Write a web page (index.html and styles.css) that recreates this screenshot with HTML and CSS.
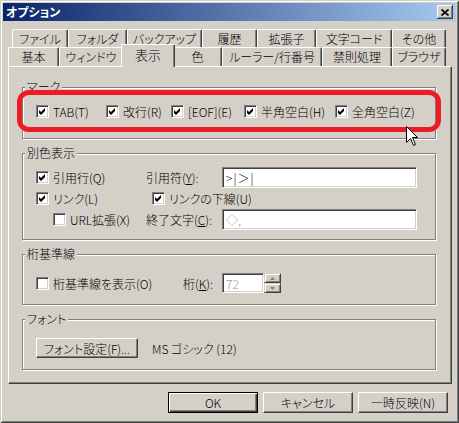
FILE: index.html
```html
<!DOCTYPE html>
<html lang="ja">
<head>
<meta charset="utf-8">
<title>オプション</title>
<link rel="stylesheet" href="styles.css">
</head>
<body>
<div class="window">
  <div class="titlebar">
    <span class="title">オプション</span>
    <span class="close"><svg width="8" height="7" viewBox="0 0 8 7"><path d="M0.5 0.5 L7.5 6.5 M7.5 0.5 L0.5 6.5" stroke="#000" stroke-width="1.7"/></svg></span>
  </div>
  <div class="content">
    <div class="tabs">
      <div class="tabrow back">
        <div class="tab t-file">ファイル</div>
        <div class="tab t-folder">フォルダ</div>
        <div class="tab t-backup">バックアップ</div>
        <div class="tab t-hist">履歴</div>
        <div class="tab t-ext">拡張子</div>
        <div class="tab t-code">文字コード</div>
        <div class="tab t-other">その他</div>
      </div>
      <div class="tabrow front">
        <div class="tab t-basic">基本</div>
        <div class="tab t-window">ウィンドウ</div>
        <div class="tab t-view sel">表示</div>
        <div class="tab t-color">色</div>
        <div class="tab t-ruler">ルーラー/行番号</div>
        <div class="tab t-kinsoku">禁則処理</div>
        <div class="tab t-browser">ブラウザ</div>
      </div>
    </div>
    <div class="panel">
      <fieldset class="group g-mark">
        <legend>マーク</legend>
        <div class="markrow">
          <label class="chk m1"><span class="cb"><svg viewBox="0 0 11 11"><polygon points="2,4 4,6 8,2 8,5 4,9 2,7"/></svg></span>TAB(T)</label>
          <label class="chk m2"><span class="cb"><svg viewBox="0 0 11 11"><polygon points="2,4 4,6 8,2 8,5 4,9 2,7"/></svg></span>改行(R)</label>
          <label class="chk m3"><span class="cb"><svg viewBox="0 0 11 11"><polygon points="2,4 4,6 8,2 8,5 4,9 2,7"/></svg></span>[EOF](E)</label>
          <label class="chk m4"><span class="cb"><svg viewBox="0 0 11 11"><polygon points="2,4 4,6 8,2 8,5 4,9 2,7"/></svg></span>半角空白(H)</label>
          <label class="chk"><span class="cb"><svg viewBox="0 0 11 11"><polygon points="2,4 4,6 8,2 8,5 4,9 2,7"/></svg></span>全角空白(Z)</label>
        </div>
      </fieldset>
      <fieldset class="group g-color">
        <legend>別色表示</legend>
        <div class="colorgrid">
          <label class="chk c-cb"><span class="cb"><svg viewBox="0 0 11 11"><polygon points="2,4 4,6 8,2 8,5 4,9 2,7"/></svg></span>引用行(Q)</label>
          <span class="lbl">引用符(<u>Y</u>):</span>
          <input class="field quote" type="text" value="&gt;|＞|" readonly>
          <label class="chk c-cb"><span class="cb"><svg viewBox="0 0 11 11"><polygon points="2,4 4,6 8,2 8,5 4,9 2,7"/></svg></span>リンク(L)</label>
          <label class="chk span2"><span class="cb"><svg viewBox="0 0 11 11"><polygon points="2,4 4,6 8,2 8,5 4,9 2,7"/></svg></span>リンクの下線(U)</label>
          <label class="chk c-indent"><span class="cb"></span>URL拡張(X)</label>
          <span class="lbl">終了文字(<u>C</u>):</span>
          <input class="field dim" type="text" value="◇," readonly>
        </div>
      </fieldset>
      <fieldset class="group g-ruler">
        <legend>桁基準線</legend>
        <div class="rulerrow">
          <label class="chk r-chk"><span class="cb"></span>桁基準線を表示(O)</label>
          <span class="lbl r-lbl">桁(<u>K</u>):</span>
          <input class="field dim r-field" type="text" value="72" readonly>
          <span class="spin">
            <span class="spinbtn"><svg width="5" height="3" viewBox="0 0 5 3"><polygon points="2.5,0 5,3 0,3" fill="#808080"/></svg></span>
            <span class="spinbtn"><svg width="5" height="3" viewBox="0 0 5 3"><polygon points="0,0 5,0 2.5,3" fill="#808080"/></svg></span>
          </span>
        </div>
      </fieldset>
      <fieldset class="group g-font">
        <legend>フォント</legend>
        <div class="fontrow">
          <button class="btn fontbtn" type="button">フォント設定(F)...</button>
          <span>MS ゴシック (12)</span>
        </div>
      </fieldset>
    </div>
    <div class="dlgbuttons">
      <button class="btn dbtn default" type="button">OK</button>
      <button class="btn dbtn" type="button">キャンセル</button>
      <button class="btn dbtn" type="button">一時反映(N)</button>
    </div>
  </div>
  <div class="highlight"></div>
  <svg class="cursor" width="13" height="21" viewBox="0 0 13 21"><path d="M0.5 0.5 L0.5 16.5 L4.5 12.5 L7.5 19.5 L9.5 18.5 L6.5 11.5 L11.5 11.5 Z" fill="#fff" stroke="#000" stroke-width="1"/></svg>
</div>
</body>
</html>
```
FILE: styles.css
```css
* { box-sizing: border-box; }
html, body { margin: 0; padding: 0; }
body {
  width: 459px;
  height: 423px;
  overflow: hidden;
  background: #d4d0c8;
  font-family: "Noto Sans CJK JP", "Noto Sans", sans-serif;
  font-size: 12px;
  font-weight: 300;
  font-feature-settings: "palt";
  color: #000;
}
.window {
  position: relative;
  width: 459px;
  height: 423px;
  padding: 3px;
  background: #d4d0c8;
  box-shadow: inset 1px 1px #d4d0c8, inset -1px -1px #404040, inset 2px 2px #fff, inset -2px -2px #808080;
}
.titlebar {
  height: 18px;
  display: flex;
  align-items: center;
  justify-content: space-between;
  padding: 0 3px 0 3px;
  background: linear-gradient(to right, #0a246a, #a6caf0);
}
.title {
  color: #fff;
  font-weight: bold;
  line-height: 18px;
}
.close {
  width: 16px;
  height: 14px;
  display: flex;
  align-items: center;
  justify-content: center;
  background: #d4d0c8;
  box-shadow: inset -1px -1px #404040, inset 1px 1px #fff, inset -2px -2px #808080;
}
.content { padding: 8px 0 0 5px; }
.tabs { width: 444px; }
.tabrow { display: flex; }
.back { height: 18px; padding-left: 4px; }
.front { height: 19px; }
.tab {
  display: flex;
  align-items: center;
  justify-content: center;
  border-top: 1px solid #fff;
  border-left: 1px solid #fff;
  border-right: 1px solid #404040;
  box-shadow: inset -1px 0 #808080;
  border-radius: 2px 2px 0 0;
  white-space: nowrap;
  line-height: 14px;
  background: #d4d0c8;
}
.tab.sel {
  margin: -3px -2px -1px;
  position: relative;
  z-index: 2;
  padding-bottom: 2px;
  font-size: 13px;
}
.t-file { width: 56px; }
.t-folder { width: 59px; }
.t-backup { width: 75px; }
.t-hist { width: 55px; }
.t-ext { width: 59px; }
.t-code { width: 76px; }
.t-other { width: 54px; }
.t-basic { width: 51px; }
.t-window { width: 64px; }
.t-view { width: 54px; }
.t-color { width: 49px; }
.t-ruler { width: 100px; }
.t-kinsoku { width: 70px; }
.t-browser { width: 54px; }

.panel {
  width: 444px;
  height: 318px;
  border: 1px solid;
  border-color: #fff #404040 #404040 #fff;
  box-shadow: inset -1px -1px #808080;
  padding: 13px 15px 0 13px;
  display: flex;
  flex-direction: column;
  gap: 7px;
}
.group {
  margin: 0;
  padding: 0 0 0 2px;
  min-width: 0;
  border: 1px solid #808080;
  box-shadow: inset 1px 1px #fff, 1px 1px #fff;
}
.group legend {
  padding: 0 2px;
  line-height: 14px;
  background: #d4d0c8;
}
.g-mark { height: 59px; }
.g-color { height: 94px; }
.g-ruler { height: 58px; }
.g-font { height: 58px; }

.chk {
  display: flex;
  align-items: center;
  gap: 4px;
  white-space: nowrap;
}
.cb {
  flex: none;
  width: 13px;
  height: 13px;
  background: #fff;
  border: 1px solid;
  border-color: #808080 #fff #fff #808080;
  box-shadow: inset 1px 1px #404040, inset -1px -1px #d4d0c8;
  display: flex;
}
.cb svg { width: 11px; height: 11px; fill: #000; }

.markrow {
  display: flex;
  align-items: center;
  height: 20px;
  margin-top: 7px;
  padding-left: 11px;
}
.m1 { width: 70px; }
.m2 { width: 65px; }
.m3 { width: 73px; }
.m4 { width: 91px; }

.colorgrid {
  display: grid;
  grid-template-columns: 121px 76px 195px;
  grid-template-rows: 22px 20px 22px;
  align-items: center;
  margin-top: 6px;
}
.c-cb { padding-left: 11px; }
.c-indent { padding-left: 28px; }
.span2 { grid-column: 2 / 4; padding-left: 6px; }
.lbl { white-space: nowrap; }
.field {
  display: block;
  width: 100%;
  height: 21px;
  margin: 0;
  padding: 0 3px;
  font: inherit;
  font-feature-settings: "palt";
  color: #000;
  background: #fff;
  border: 1px solid;
  border-color: #808080 #fff #fff #808080;
  box-shadow: inset 1px 1px #404040, inset -1px -1px #d4d0c8;
  outline: none;
}
.field.quote { letter-spacing: 1px; font-feature-settings: normal; }
.field.dim { color: #9a9a9a; }

.rulerrow {
  display: flex;
  align-items: center;
  height: 20px;
  margin-top: 12px;
  padding-left: 11px;
}
.r-chk { width: 147px; }
.r-lbl { width: 39px; }
.r-field { width: 42px; height: 20px; }
.spin {
  width: 17px;
  height: 20px;
  display: flex;
  flex-direction: column;
}
.spinbtn {
  flex: 1;
  display: flex;
  align-items: center;
  justify-content: center;
  background: #d4d0c8;
  border: 1px solid;
  border-color: #d4d0c8 #404040 #404040 #d4d0c8;
  box-shadow: inset 1px 1px #fff, inset -1px -1px #808080;
}

.fontrow {
  display: flex;
  align-items: center;
  gap: 14px;
  margin-top: 12px;
  padding-left: 11px;
}
.btn {
  display: flex;
  align-items: center;
  justify-content: center;
  margin: 0;
  padding: 0;
  font: inherit;
  font-feature-settings: "palt";
  color: #000;
  background: #d4d0c8;
  border: 1px solid;
  border-color: #fff #404040 #404040 #fff;
  box-shadow: inset -1px -1px #808080;
  white-space: nowrap;
}
.fontbtn { width: 102px; height: 20px; }
.dlgbuttons {
  display: flex;
  justify-content: flex-end;
  gap: 5px;
  margin-top: 8px;
  padding-right: 8px;
}
.dbtn { width: 90px; height: 21px; }
.btn.default {
  border-color: #000;
  box-shadow: inset 1px 1px #fff, inset -1px -1px #404040, inset -2px -2px #808080;
}

.highlight {
  position: absolute;
  left: 17px;
  top: 90px;
  width: 424px;
  height: 42px;
  border: 5px solid #ec1c24;
  border-radius: 12px;
}
.cursor {
  position: absolute;
  left: 406px;
  top: 126px;
}
```
